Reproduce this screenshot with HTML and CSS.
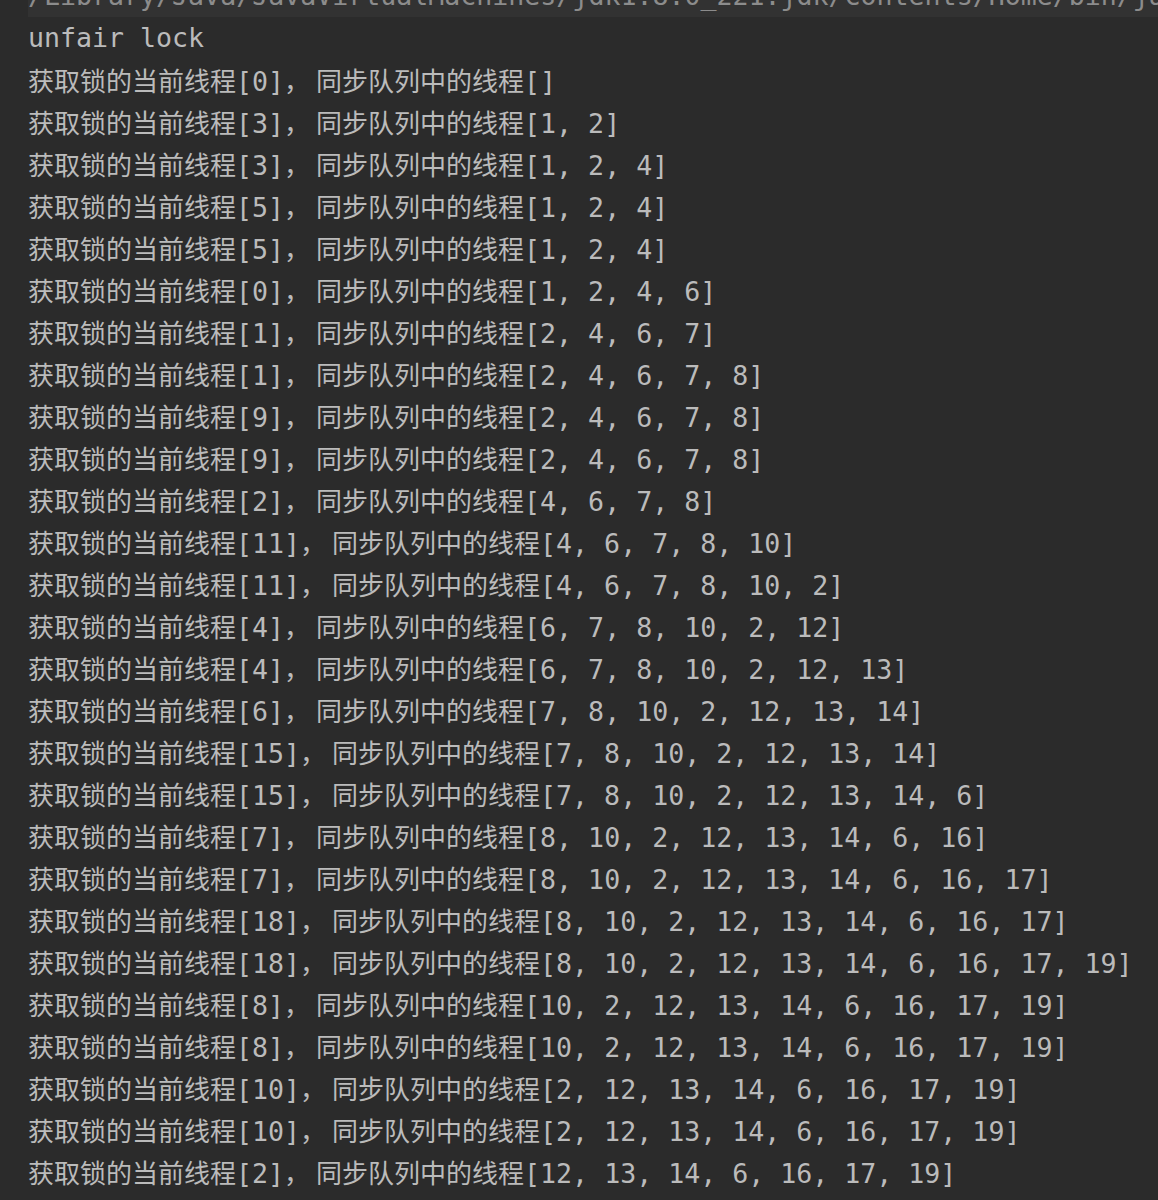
FILE: index.html
```html
<!DOCTYPE html>
<html lang="zh-CN">
<head>
<meta charset="utf-8">
<title>Console</title>
<link rel="stylesheet" href="styles.css">
</head>
<body>
<div class="console">
  <div class="line cmd"><span class="mono">/Library/Java/JavaVirtualMachines/jdk1.8.0_221.jdk/Contents/Home/bin/java -Dfile.encoding=UTF-8</span></div>
  <div class="line"><span class="mono">unfair lock</span></div>
  <div class="line"><span class="cjk">获取锁的当前线程</span><span class="mono">[0]</span><span class="sep">，</span><span class="cjk">同步队列中的线程</span><span class="mono">[]</span></div>
  <div class="line"><span class="cjk">获取锁的当前线程</span><span class="mono">[3]</span><span class="sep">，</span><span class="cjk">同步队列中的线程</span><span class="mono">[1, 2]</span></div>
  <div class="line"><span class="cjk">获取锁的当前线程</span><span class="mono">[3]</span><span class="sep">，</span><span class="cjk">同步队列中的线程</span><span class="mono">[1, 2, 4]</span></div>
  <div class="line"><span class="cjk">获取锁的当前线程</span><span class="mono">[5]</span><span class="sep">，</span><span class="cjk">同步队列中的线程</span><span class="mono">[1, 2, 4]</span></div>
  <div class="line"><span class="cjk">获取锁的当前线程</span><span class="mono">[5]</span><span class="sep">，</span><span class="cjk">同步队列中的线程</span><span class="mono">[1, 2, 4]</span></div>
  <div class="line"><span class="cjk">获取锁的当前线程</span><span class="mono">[0]</span><span class="sep">，</span><span class="cjk">同步队列中的线程</span><span class="mono">[1, 2, 4, 6]</span></div>
  <div class="line"><span class="cjk">获取锁的当前线程</span><span class="mono">[1]</span><span class="sep">，</span><span class="cjk">同步队列中的线程</span><span class="mono">[2, 4, 6, 7]</span></div>
  <div class="line"><span class="cjk">获取锁的当前线程</span><span class="mono">[1]</span><span class="sep">，</span><span class="cjk">同步队列中的线程</span><span class="mono">[2, 4, 6, 7, 8]</span></div>
  <div class="line"><span class="cjk">获取锁的当前线程</span><span class="mono">[9]</span><span class="sep">，</span><span class="cjk">同步队列中的线程</span><span class="mono">[2, 4, 6, 7, 8]</span></div>
  <div class="line"><span class="cjk">获取锁的当前线程</span><span class="mono">[9]</span><span class="sep">，</span><span class="cjk">同步队列中的线程</span><span class="mono">[2, 4, 6, 7, 8]</span></div>
  <div class="line"><span class="cjk">获取锁的当前线程</span><span class="mono">[2]</span><span class="sep">，</span><span class="cjk">同步队列中的线程</span><span class="mono">[4, 6, 7, 8]</span></div>
  <div class="line"><span class="cjk">获取锁的当前线程</span><span class="mono">[11]</span><span class="sep">，</span><span class="cjk">同步队列中的线程</span><span class="mono">[4, 6, 7, 8, 10]</span></div>
  <div class="line"><span class="cjk">获取锁的当前线程</span><span class="mono">[11]</span><span class="sep">，</span><span class="cjk">同步队列中的线程</span><span class="mono">[4, 6, 7, 8, 10, 2]</span></div>
  <div class="line"><span class="cjk">获取锁的当前线程</span><span class="mono">[4]</span><span class="sep">，</span><span class="cjk">同步队列中的线程</span><span class="mono">[6, 7, 8, 10, 2, 12]</span></div>
  <div class="line"><span class="cjk">获取锁的当前线程</span><span class="mono">[4]</span><span class="sep">，</span><span class="cjk">同步队列中的线程</span><span class="mono">[6, 7, 8, 10, 2, 12, 13]</span></div>
  <div class="line"><span class="cjk">获取锁的当前线程</span><span class="mono">[6]</span><span class="sep">，</span><span class="cjk">同步队列中的线程</span><span class="mono">[7, 8, 10, 2, 12, 13, 14]</span></div>
  <div class="line"><span class="cjk">获取锁的当前线程</span><span class="mono">[15]</span><span class="sep">，</span><span class="cjk">同步队列中的线程</span><span class="mono">[7, 8, 10, 2, 12, 13, 14]</span></div>
  <div class="line"><span class="cjk">获取锁的当前线程</span><span class="mono">[15]</span><span class="sep">，</span><span class="cjk">同步队列中的线程</span><span class="mono">[7, 8, 10, 2, 12, 13, 14, 6]</span></div>
  <div class="line"><span class="cjk">获取锁的当前线程</span><span class="mono">[7]</span><span class="sep">，</span><span class="cjk">同步队列中的线程</span><span class="mono">[8, 10, 2, 12, 13, 14, 6, 16]</span></div>
  <div class="line"><span class="cjk">获取锁的当前线程</span><span class="mono">[7]</span><span class="sep">，</span><span class="cjk">同步队列中的线程</span><span class="mono">[8, 10, 2, 12, 13, 14, 6, 16, 17]</span></div>
  <div class="line"><span class="cjk">获取锁的当前线程</span><span class="mono">[18]</span><span class="sep">，</span><span class="cjk">同步队列中的线程</span><span class="mono">[8, 10, 2, 12, 13, 14, 6, 16, 17]</span></div>
  <div class="line"><span class="cjk">获取锁的当前线程</span><span class="mono">[18]</span><span class="sep">，</span><span class="cjk">同步队列中的线程</span><span class="mono">[8, 10, 2, 12, 13, 14, 6, 16, 17, 19]</span></div>
  <div class="line"><span class="cjk">获取锁的当前线程</span><span class="mono">[8]</span><span class="sep">，</span><span class="cjk">同步队列中的线程</span><span class="mono">[10, 2, 12, 13, 14, 6, 16, 17, 19]</span></div>
  <div class="line"><span class="cjk">获取锁的当前线程</span><span class="mono">[8]</span><span class="sep">，</span><span class="cjk">同步队列中的线程</span><span class="mono">[10, 2, 12, 13, 14, 6, 16, 17, 19]</span></div>
  <div class="line"><span class="cjk">获取锁的当前线程</span><span class="mono">[10]</span><span class="sep">，</span><span class="cjk">同步队列中的线程</span><span class="mono">[2, 12, 13, 14, 6, 16, 17, 19]</span></div>
  <div class="line"><span class="cjk">获取锁的当前线程</span><span class="mono">[10]</span><span class="sep">，</span><span class="cjk">同步队列中的线程</span><span class="mono">[2, 12, 13, 14, 6, 16, 17, 19]</span></div>
  <div class="line"><span class="cjk">获取锁的当前线程</span><span class="mono">[2]</span><span class="sep">，</span><span class="cjk">同步队列中的线程</span><span class="mono">[12, 13, 14, 6, 16, 17, 19]</span></div>
</div>
</body>
</html>
```

FILE: styles.css
```css
html, body {
  margin: 0;
  padding: 0;
  background: #2b2b2b;
  overflow: hidden;
}

.console {
  margin-top: -25px;
  padding-left: 28px;
  color: #bbbbbb;
}

.line {
  height: 42px;
  line-height: 42px;
  white-space: pre;
  overflow: hidden;
}

.line.cmd {
  background: #323232;
  color: #8c8c8c;
}

.mono {
  font-family: "DejaVu Sans Mono", "Liberation Mono", monospace;
  font-size: 26.6px;
}

.cjk {
  font-family: "Noto Sans CJK SC", sans-serif;
  font-size: 26px;
}

.sep {
  display: inline-block;
  width: 32px;
  font-family: "Noto Sans CJK SC", sans-serif;
  font-size: 26px;
}
```
